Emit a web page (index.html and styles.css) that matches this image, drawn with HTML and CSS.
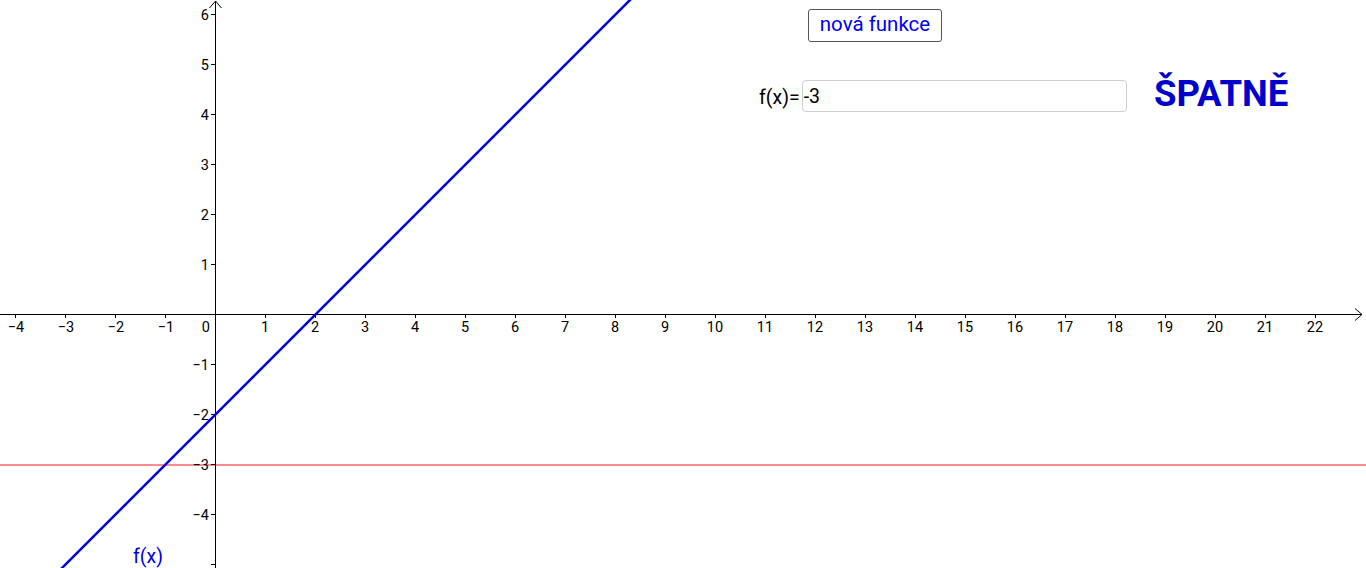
FILE: index.html
```html
<!DOCTYPE html>
<html lang="cs">
<head>
<meta charset="utf-8">
<title>Graf funkce</title>
<link rel="stylesheet" href="styles.css">
</head>
<body>
<div class="applet">
<svg class="graph" width="1366" height="568" viewBox="0 0 1366 568" xmlns="http://www.w3.org/2000/svg">
  <line class="redline" x1="0" y1="465" x2="1366" y2="465"/>
  <g class="axes">
    <line x1="0" y1="314.5" x2="1362" y2="314.5"/>
    <polyline points="1355,308.5 1362,314.5 1355,320.5" fill="none"/>
    <line x1="215.5" y1="568" x2="215.5" y2="1"/>
    <polyline points="209.5,8 215.5,1 221.5,8" fill="none"/>
    <path d="M15.5 314v4 M65.5 314v4 M115.5 314v4 M165.5 314v4 M265.5 314v4 M315.5 314v4 M365.5 314v4 M415.5 314v4 M465.5 314v4 M515.5 314v4 M565.5 314v4 M615.5 314v4 M665.5 314v4 M715.5 314v4 M765.5 314v4 M815.5 314v4 M865.5 314v4 M915.5 314v4 M965.5 314v4 M1015.5 314v4 M1065.5 314v4 M1115.5 314v4 M1165.5 314v4 M1215.5 314v4 M1265.5 314v4 M1315.5 314v4"/>
    <path d="M211 14.5h4 M211 64.5h4 M211 114.5h4 M211 164.5h4 M211 214.5h4 M211 264.5h4 M211 364.5h4 M211 414.5h4 M211 464.5h4 M211 514.5h4 M211 564.5h4"/>
  </g>
  <g class="xlabels">
    <text x="16" y="332">−4</text><text x="66" y="332">−3</text><text x="116" y="332">−2</text><text x="166" y="332">−1</text>
    <text x="265" y="332">1</text><text x="315" y="332">2</text><text x="365" y="332">3</text><text x="415" y="332">4</text>
    <text x="465" y="332">5</text><text x="515" y="332">6</text><text x="565" y="332">7</text><text x="615" y="332">8</text>
    <text x="665" y="332">9</text><text x="715" y="332">10</text><text x="765" y="332">11</text><text x="815" y="332">12</text>
    <text x="865" y="332">13</text><text x="915" y="332">14</text><text x="965" y="332">15</text><text x="1015" y="332">16</text>
    <text x="1065" y="332">17</text><text x="1115" y="332">18</text><text x="1165" y="332">19</text><text x="1215" y="332">20</text>
    <text x="1265" y="332">21</text><text x="1315" y="332">22</text>
  </g>
  <g class="ylabels">
    <text x="210" y="332">0</text>
    <text x="209" y="20">6</text><text x="209" y="70">5</text><text x="209" y="120">4</text><text x="209" y="170">3</text>
    <text x="209" y="220">2</text><text x="209" y="270">1</text><text x="209" y="370">−1</text><text x="209" y="420">−2</text>
    <text x="209" y="470">−3</text><text x="209" y="520">−4</text>
  </g>
  <line class="fline" x1="60" y1="570" x2="632" y2="-2"/>
  <text class="flabel" x="133" y="563">f(x)</text>
</svg>
<button class="newbtn" type="button">nová funkce</button>
<div class="inputrow">
  <span class="inlabel">f(x)=</span>
  <div class="inbox">-3</div>
</div>
<div class="verdict">ŠPATNĚ</div>
</div>
</body>
</html>
```

FILE: styles.css
```css
html, body {
  margin: 0;
  padding: 0;
  background: #ffffff;
  overflow: hidden;
}
.applet {
  position: relative;
  width: 1366px;
  height: 568px;
  font-family: Roboto, "Liberation Sans", sans-serif;
}
.graph {
  display: block;
}
.axes line, .axes polyline, .axes path {
  stroke: #000000;
  stroke-width: 1;
}
.xlabels text {
  font-family: Roboto, "Liberation Sans", sans-serif;
  font-size: 14.5px;
  text-anchor: middle;
  fill: #000;
}
.ylabels text {
  font-family: Roboto, "Liberation Sans", sans-serif;
  font-size: 14.5px;
  text-anchor: end;
  fill: #000;
}
.redline {
  stroke: #ff8c8c;
  stroke-width: 2;
}
.fline {
  stroke: #0000dd;
  stroke-width: 2.5;
}
.flabel {
  font-family: Roboto, "Liberation Sans", sans-serif;
  font-size: 19.5px;
  fill: #0000dd;
}
.newbtn {
  position: absolute;
  left: 808px;
  top: 9px;
  width: 134px;
  height: 33px;
  box-sizing: border-box;
  border: 1px solid #555;
  border-radius: 3px;
  background: #fff;
  color: #0000ee;
  font-family: Roboto, "Liberation Sans", sans-serif;
  font-size: 20.5px;
  padding: 0 0 3px 0;
  line-height: 26px;
}
.inputrow {
  position: absolute;
  left: 759px;
  top: 80px;
  display: flex;
  align-items: center;
}
.inlabel {
  font-size: 19.5px;
  color: #000;
  margin-right: 2px;
  padding-top: 2px;
}
.inbox {
  width: 325px;
  height: 32px;
  box-sizing: border-box;
  border: 1px solid #cfcfcf;
  border-radius: 4px;
  font-size: 19.5px;
  line-height: 32px;
  padding-left: 1px;
  color: #000;
}
.verdict {
  position: absolute;
  left: 1154px;
  top: 72px;
  font-family: Roboto, "Liberation Sans", sans-serif;
  font-weight: bold;
  font-size: 36.5px;
  color: #0000cc;
}
```
